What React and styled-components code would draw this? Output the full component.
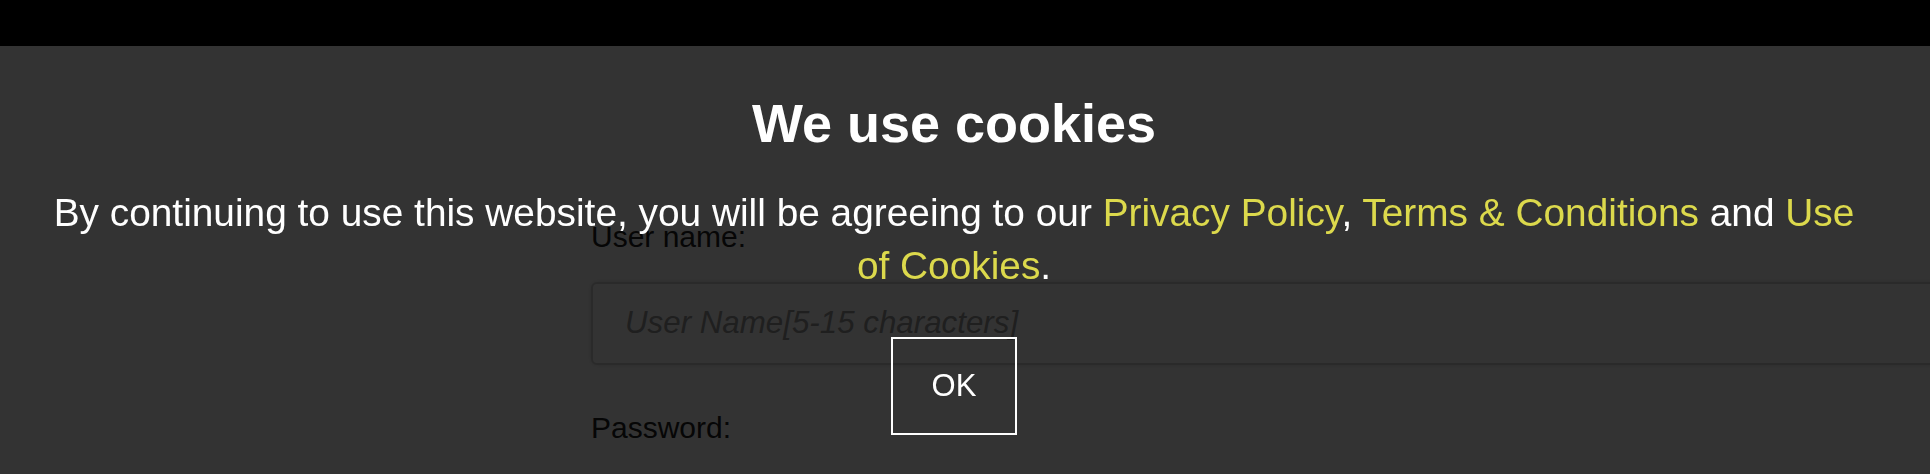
import React from 'react'
import styled, { createGlobalStyle } from 'styled-components'

const GlobalStyle = createGlobalStyle`
  html, body {
    margin: 0;
    padding: 0;
    background: #fff;
    overflow: hidden;
  }
  body {
    font-family: 'Liberation Sans', Arial, Helvetica, sans-serif;
  }
`

const TopBar = styled.header`
  height: 46px;
  background: #000;
`

const Main = styled.main`
  padding: 174px 0 0 591px;
`

const Field = styled.div`
  display: flex;
  flex-direction: column;
  margin-bottom: 46px;
`

const Label = styled.label`
  font-size: 30px;
  line-height: 1.15;
  color: #222;
  margin-bottom: 27px;
`

const Input = styled.input`
  box-sizing: border-box;
  width: 1400px;
  height: 83px;
  padding: 0 32px;
  border: 2px solid #d2d2d2;
  border-radius: 6px;
  box-shadow: 0 0 4px rgba(0, 0, 0, 0.14);
  background: #fff;
  font-family: inherit;
  font-size: 31.3px;
  outline: none;
  &::placeholder {
    color: #9a9a9a;
    font-style: italic;
  }
`

const Overlay = styled.div`
  position: fixed;
  inset: 0;
  background: rgba(0, 0, 0, 0.8);
  display: flex;
  flex-direction: column;
  align-items: center;
  padding: 92px 22px 0 0;
  color: #fff;
  text-align: center;
`

const Title = styled.h2`
  margin: 0 0 32px;
  font-size: 54px;
  line-height: 62px;
  font-weight: 700;
`

const Message = styled.p`
  margin: 0 0 45px;
  max-width: 1825px;
  font-size: 38.85px;
  line-height: 53px;
`

const Link = styled.a`
  color: #dcd94c;
  text-decoration: none;
`

const OkButton = styled.button`
  background: transparent;
  border: 2px solid #fff;
  color: #fff;
  font-family: inherit;
  font-size: 31px;
  line-height: 1.15;
  padding: 29px 39px;
  cursor: pointer;
`

export default function App() {
  return (
    <>
      <GlobalStyle />
      <TopBar />
      <Main>
        <Field>
          <Label htmlFor="user">User name:</Label>
          <Input id="user" placeholder="User Name[5-15 characters]" />
        </Field>
        <Field>
          <Label htmlFor="pass">Password:</Label>
        </Field>
      </Main>
      <Overlay>
        <Title>We use cookies</Title>
        <Message>
          By continuing to use this website, you will be agreeing to our{' '}
          <Link href="#">Privacy Policy</Link>, <Link href="#">Terms &amp; Conditions</Link> and{' '}
          <Link href="#">Use of Cookies</Link>.
        </Message>
        <OkButton>OK</OkButton>
      </Overlay>
    </>
  )
}
